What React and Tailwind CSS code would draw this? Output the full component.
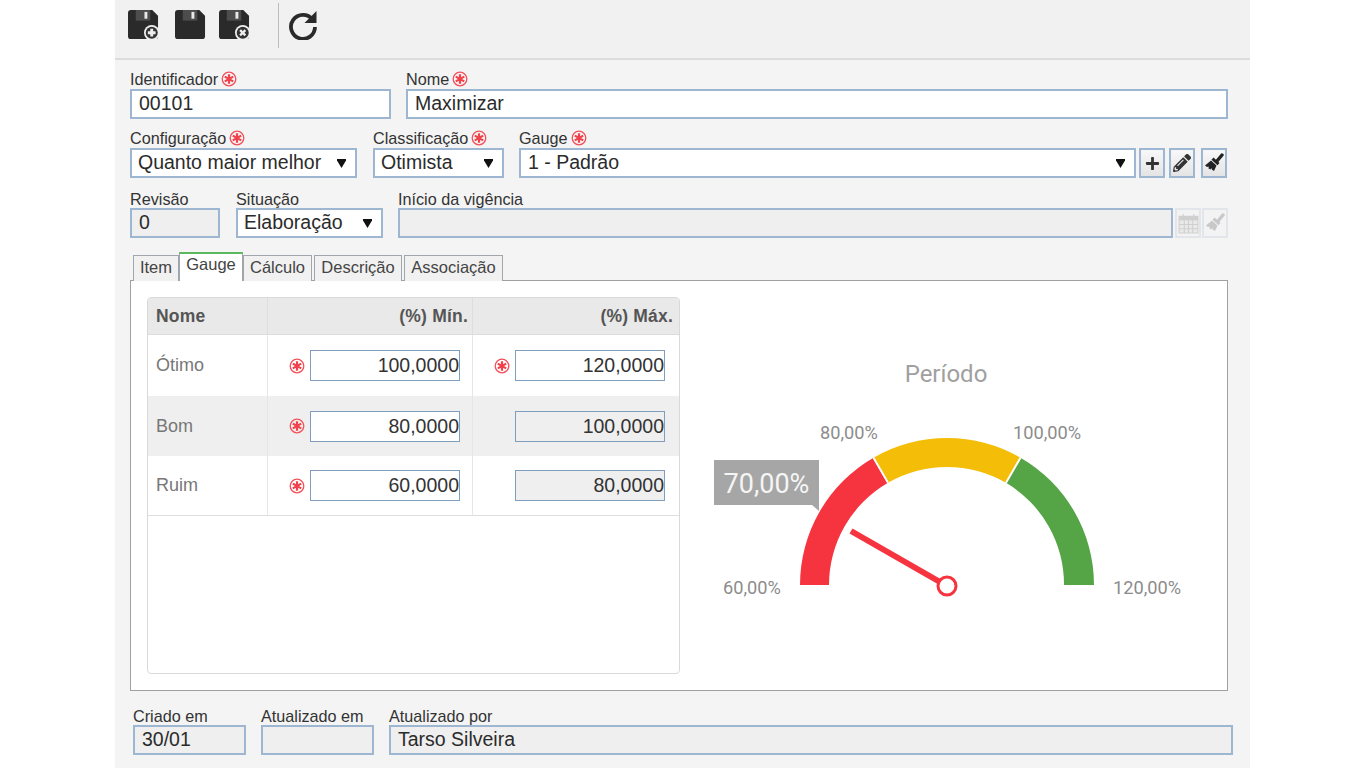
import React from 'react';
import { FaPlus, FaPencilAlt } from 'react-icons/fa';

const Req = ({ className = '' }) => (
  <svg viewBox="0 0 16 16" className={`w-[16px] h-[16px] shrink-0 ${className}`}>
    <circle cx="8" cy="8" r="6.8" fill="none" stroke="#f2505a" strokeWidth="1.3" />
    <path d="M8 3.2v9.6M3.8 5.6l8.4 4.8M12.2 5.6l-8.4 4.8" stroke="#f2414a" strokeWidth="2.2" />
  </svg>
);

const Floppy = ({ badge }) => (
  <svg viewBox="0 0 32 32" className="w-[31px] h-[31px]">
    <path d="M3 1H25L31 7V28a3 3 0 0 1-3 3H3a3 3 0 0 1-3-3V4a3 3 0 0 1 3-3Z" fill="#2a2a2a" />
    <path d="M8 1H23V12H8Z" fill="#4d4d4d" />
    <path d="M17 3H20V10H17Z" fill="#e8e8e8" />
    {badge && <circle cx="24.5" cy="24.5" r="8" fill="#f1f1f1" />}
    {badge && <circle cx="24.5" cy="24.5" r="6.2" fill="#333" />}
    {badge === 'plus' && <path d="M20.5 24.5h8M24.5 20.5v8" stroke="#eee" strokeWidth="3" />}
    {badge === 'x' && <path d="M21.8 21.8l5.4 5.4M27.2 21.8l-5.4 5.4" stroke="#eee" strokeWidth="2.4" />}
  </svg>
);

const Brush = ({ color = '#222' }) => (
  <svg viewBox="0 0 20 20" className="w-[20px] h-[20px]">
    <path d="M13 8l5-6" stroke={color} strokeWidth="3.4" strokeLinecap="round" />
    <path d="M9.5 4.5l6 5.5-2 2.2-6-5.5Z" fill={color} />
    <path d="M7 7.5l5.5 5-2.5 5.5-2-1.2-.8-1.8-.7 1.6-2-1.2.2-2-1.7.6L1 12.4Z" fill={color} />
  </svg>
);

const Calendar = () => (
  <svg viewBox="0 0 20 20" className="w-[21px] h-[21px]">
    <path d="M1 3h18v16H1Z" fill="#e9e9e9" stroke="#cfcfcf" />
    <path d="M1 3h18v4H1Z" fill="#cfcfcf" />
    <path d="M5 1v4M15 1v4M1 11h18M1 15h18M6 7v12M10 7v12M14 7v12" stroke="#cfcfcf" />
  </svg>
);

const Arrow = () => (
  <svg viewBox="0 0 9 9" className="w-[9px] h-[9px] shrink-0">
    <path d="M0 0H9V1.5L4.5 9 0 1.5Z" fill="#111" />
  </svg>
);

const Label = ({ children, req, className = '' }) => (
  <div className={`flex items-center gap-[3px] h-[20px] text-[16.2px] leading-[20px] text-[#333] whitespace-nowrap ${className}`}>
    {children}
    {req && <Req />}
  </div>
);

const Field = ({ label, req, value, readOnly, select, className = '', boxClass = '', labelClass = '' }) => (
  <div className={`shrink-0 ${className}`}>
    <Label req={req} className={labelClass}>{label}</Label>
    <div
      className={`flex items-center justify-between h-[30px] border-2 border-[#9db6d2] pr-[9px] text-[19.5px] text-[#2b2b2b] whitespace-nowrap ${readOnly ? 'bg-[#efefef]' : 'bg-white'} ${select ? 'pl-[6px]' : 'pl-[7px]'} ${boxClass}`}
    >
      <span>{value}</span>
      {select && <Arrow />}
    </div>
  </div>
);

const IconBtn = ({ children, disabled, className = '' }) => (
  <div
    className={`flex items-center justify-center w-[26px] h-[30px] border-2 ${disabled ? 'border-[#e2e6ea] bg-[#f3f3f3]' : 'border-[#9db6d2] bg-gradient-to-b from-[#f8f8f8] to-[#e4e4e4]'} ${className}`}
  >
    {children}
  </div>
);

const Tabs = () => (
  <div className="flex items-end h-[28px] ml-[3px] mt-[14px] relative z-10 text-[16.5px] text-[#444] text-center">
    <div className="w-[46px] h-[26px] mb-[-1px] border border-b-0 border-[#a0a6ac] bg-[#f1f1f1] leading-[23px]">Item</div>
    <div className="w-[64px] h-[29px] mb-[-1px] border-x border-[#a0a6ac] border-t-2 border-t-[#5cb85c] bg-white leading-[20px]">Gauge</div>
    <div className="w-[69px] h-[26px] mb-[-1px] border border-b-0 border-[#a0a6ac] bg-[#f1f1f1] leading-[23px]">Cálculo</div>
    <div className="w-[88px] h-[26px] mb-[-1px] ml-[2px] border border-b-0 border-[#a0a6ac] bg-[#f1f1f1] leading-[23px]">Descrição</div>
    <div className="w-[99px] h-[26px] mb-[-1px] ml-[2px] border border-b-0 border-[#a0a6ac] bg-[#f1f1f1] leading-[23px]">Associação</div>
  </div>
);

const NumInput = ({ value, readOnly }) => (
  <div className={`w-[150px] h-[31px] border border-[#7f9dbd] text-right text-[19.5px] leading-[29px] text-[#333] ${readOnly ? 'bg-[#efefef]' : 'bg-white'}`}>
    {value}
  </div>
);

const rows = [
  { name: 'Ótimo', min: '100,0000', max: '120,0000', h: 'h-[61px]' },
  { name: 'Bom', min: '80,0000', max: '100,0000', ro: true, alt: true, h: 'h-[60px]' },
  { name: 'Ruim', min: '60,0000', max: '80,0000', ro: true, h: 'h-[60px]' },
];

const GaugeTable = () => (
  <div className="w-[533px] h-[377px] shrink-0 border border-[#d9d9d9] rounded-[4px] overflow-hidden bg-white">
    <div className="flex h-[37px] bg-[#e9e9e9] border-b border-[#dcdcdc] text-[17.5px] tracking-[0.2px] font-bold text-[#555] leading-[36px]">
      <div className="w-[120px] pl-[8px] border-r border-[#dedede]">Nome</div>
      <div className="w-[205px] pr-[4px] text-right border-r border-[#dedede]">(%) Mín.</div>
      <div className="flex-1 pr-[6px] text-right">(%) Máx.</div>
    </div>
    {rows.map((r) => (
      <div key={r.name} className={`flex ${r.h} ${r.alt ? 'bg-[#efefef]' : ''} ${r.name === 'Ruim' ? 'border-b border-[#dedede]' : ''}`}>
        <div className="w-[120px] pl-[8px] flex items-center border-r border-[#e6e6e6] text-[18px] text-[#777]">{r.name}</div>
        <div className="w-[205px] flex items-center justify-end gap-[5px] pr-[12px] border-r border-[#e6e6e6]">
          <Req />
          <NumInput value={r.min} />
        </div>
        <div className="flex-1 flex items-center justify-end gap-[5px] pr-[14px]">
          {!r.ro && <Req />}
          <NumInput value={r.max} readOnly={r.ro} />
        </div>
      </div>
    ))}
  </div>
);

const Gauge = () => (
  <svg viewBox="680 297 547 378" className="w-[547px] h-[378px] shrink-0" fontFamily="Roboto, sans-serif">
    <text x="946" y="382" textAnchor="middle" fontSize="24" fill="#a0a0a0">Período</text>
    <path d="M800 585A147 147 0 0 1 873.5 457.7L888 482.8A118 118 0 0 0 829 585Z" fill="#f63440" />
    <path d="M873.5 457.7A147 147 0 0 1 1020.5 457.7L1006 482.8A118 118 0 0 0 888 482.8Z" fill="#f4bd07" />
    <path d="M1020.5 457.7A147 147 0 0 1 1094 585H1064A118 118 0 0 0 1006 482.8Z" fill="#55a546" />
    <path d="M873.5 457.7L888 482.8M1020.5 457.7L1006 482.8" stroke="#fff" strokeWidth="2" />
    <path d="M851 531L947 586" stroke="#f63440" strokeWidth="6" />
    <circle cx="947" cy="586" r="9" fill="#fff" stroke="#f63440" strokeWidth="3" />
    <path d="M714 460H819V511L812 505H714Z" fill="#a6a6a6" />
    <text x="766.5" y="493" textAnchor="middle" fontSize="27" fill="#f5f5f5">70,00%</text>
    <g fontSize="18.2" fill="#8c8c8c">
      <text x="723" y="594">60,00%</text>
      <text x="820" y="439">80,00%</text>
      <text x="1013" y="439">100,00%</text>
      <text x="1113" y="594">120,00%</text>
    </g>
  </svg>
);

const App = () => {
  return (
    <div className="h-[768px] overflow-hidden bg-white font-['Liberation_Sans',Arial,sans-serif]">
      <div className="ml-[115px] w-[1135px] h-[768px] bg-[#f4f4f4]">
        <div className="flex items-start h-[60px] pl-[13px] bg-[#f1f1f1] border-b-2 border-[#dcdcdc]">
          <div className="mt-[9px]"><Floppy badge="plus" /></div>
          <div className="mt-[9px] ml-[16px]"><Floppy /></div>
          <div className="mt-[9px] ml-[13px]"><Floppy badge="x" /></div>
          <div className="w-px h-[45px] mt-[3px] ml-[28px] bg-[#bdbdbd]" />
          <svg viewBox="0 0 30 30" className="w-[30px] h-[30px] ml-[9px] mt-[10px]">
            <path d="M24.5 9.5A12 12 0 1 0 27 17" fill="none" stroke="#2a2a2a" strokeWidth="3.8" />
            <path d="M28.5 1V13H16.5Z" fill="#2a2a2a" />
          </svg>
        </div>

        <div className="pl-[15px] pr-[22px] pt-[9px]">
          <div className="flex gap-[15px]">
            <Field label="Identificador" req value="00101" className="w-[261px]" />
            <Field label="Nome" req value="Maximizar" className="w-[822px]" />
          </div>

          <div className="flex items-end mt-[9px]">
            <Field label="Configuração" req value="Quanto maior melhor" select className="w-[227px]" />
            <Field label="Classificação" req value="Otimista" select className="w-[131px] ml-[16px]" />
            <Field label="Gauge" req value="1 - Padrão" select className="w-[617px] ml-[15px]" boxClass="pl-[7px]" />
            <IconBtn className="ml-[3px]"><FaPlus className="w-[15px] h-[15px] text-[#333]" /></IconBtn>
            <IconBtn className="ml-[4px]"><FaPencilAlt className="w-[18px] h-[18px] text-[#333]" /></IconBtn>
            <IconBtn className="ml-[6px]"><Brush /></IconBtn>
          </div>

          <div className="flex items-end mt-[10px]">
            <Field label="Revisão" value="0" readOnly className="w-[90px]" labelClass="translate-y-[1px]" />
            <Field label="Situação" value="Elaboração" select className="w-[147px] ml-[16px]" labelClass="translate-y-[1px]" />
            <Field label="Início da vigência" value="" readOnly className="w-[775px] ml-[15px]" labelClass="translate-y-[1px]" />
            <IconBtn disabled className="ml-[2px]"><Calendar /></IconBtn>
            <IconBtn disabled className="ml-[1px]"><Brush color="#c8c8c8" /></IconBtn>
          </div>

          <Tabs />

          <div className="flex h-[411px] pl-[16px] pt-[16px] border border-[#a0a0a0] bg-white">
            <GaugeTable />
            <Gauge />
          </div>

          <div className="flex mt-[15px] ml-[3px] w-[1100px]">
            <Field label="Criado em" value="30/01" readOnly className="w-[113px]" labelClass="!h-[19px]" />
            <Field label="Atualizado em" value="" readOnly className="w-[113px] ml-[15px]" labelClass="!h-[19px]" />
            <Field label="Atualizado por" value="Tarso Silveira" readOnly className="w-[844px] ml-[15px]" labelClass="!h-[19px]" />
          </div>
        </div>
      </div>
    </div>
  );
};

export default App;
